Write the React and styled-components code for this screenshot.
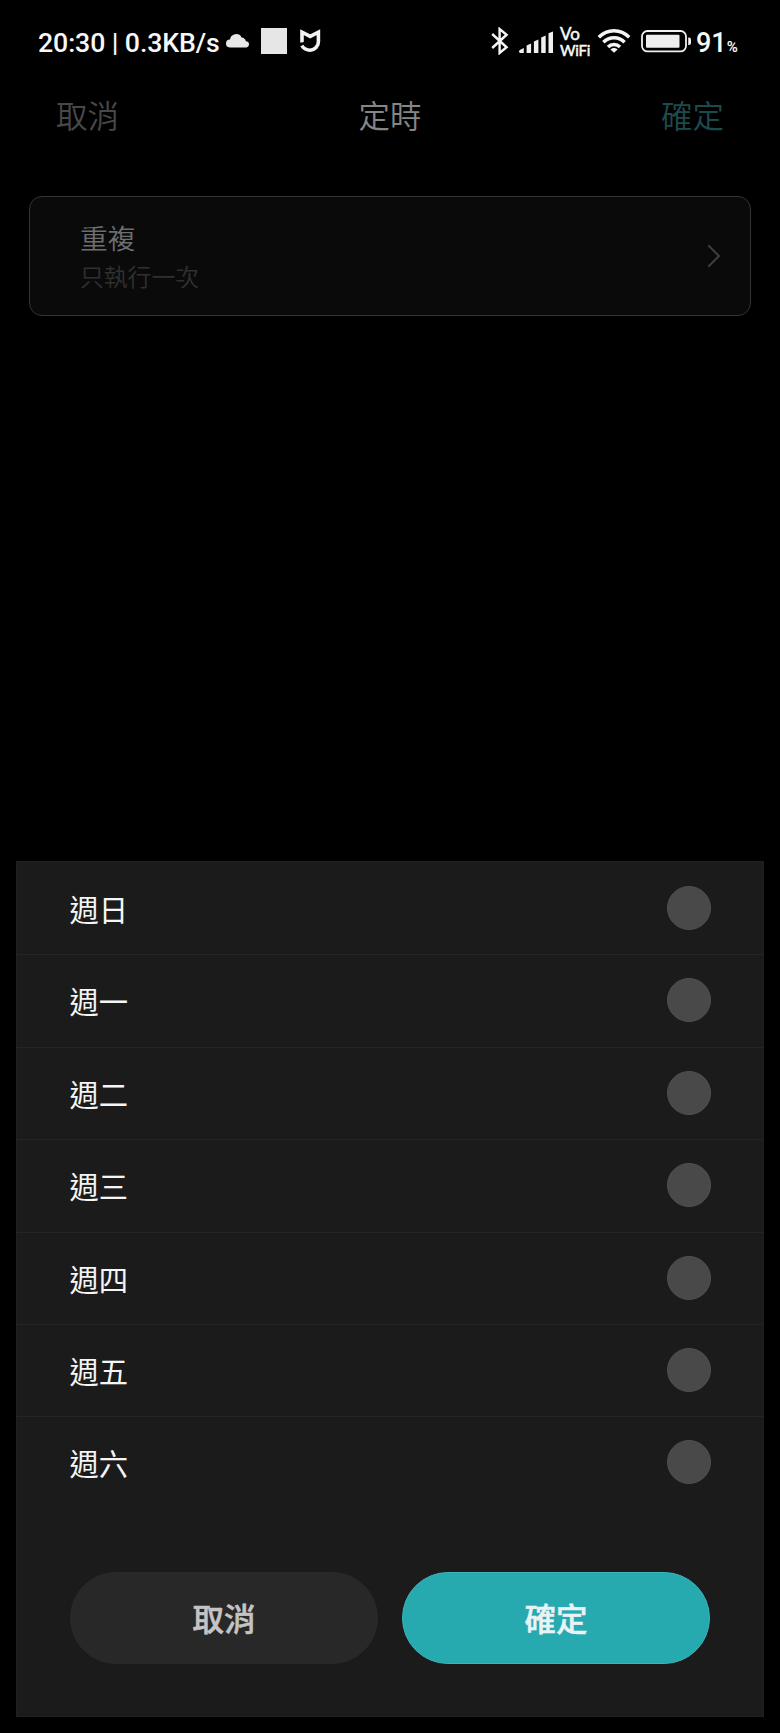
import styled, { createGlobalStyle } from 'styled-components';

const days = ['週日', '週一', '週二', '週三', '週四', '週五', '週六'];

function CloudIcon() {
  return (
    <svg width="24" height="14" viewBox="0 0 24 14" fill="#e8e8e8">
      <path d="M3.8 13.4A3.8 3.8 0 0 1 4 5.6 6.2 6.2 0 0 1 15.6 3.4 4.8 4.8 0 0 1 19.9 7.3 3.1 3.1 0 0 1 20.7 13.4Z" />
    </svg>
  );
}

function MiHomeIcon() {
  return (
    <svg width="21" height="24" viewBox="0 0 21 24" fill="none" stroke="#f2f2f2" strokeWidth="3.6">
      <path d="M2 13.6V3.2L10.2 7.4 18.4 3.2V12.6A8.4 8.4 0 0 1 10.2 21.2C6.6 21.2 3.6 19.4 1.8 16.6" />
      <path d="M.2 15.8 4.4 13.2" stroke="#000" strokeWidth="1.3" />
    </svg>
  );
}

function BluetoothIcon() {
  return (
    <svg width="18" height="28" viewBox="0 0 18 28" fill="none" stroke="#f5f5f5" strokeWidth="2.4">
      <path d="M1.2 7 15.6 20.3 8.6 26V2L15.6 7.7 1.2 21" />
    </svg>
  );
}

function SignalIcon() {
  return (
    <svg width="35" height="22" viewBox="0 0 35 22" fill="#f0f0f0">
      <path d="M0 20.6Q0 19.3 1.2 18.8L4.8 17V22H1.2Q0 22 0 20.6Z" />
      <path d="M7.6 14.6 12.1 12.6V22H7.6Z" />
      <path d="M14.9 10.6 19.4 8.6V22H14.9Z" />
      <path d="M22.2 6.4 26.7 4.4V22H22.2Z" />
      <path d="M29.5 2.2 34 .4V22H29.5Z" />
    </svg>
  );
}

function WifiIcon() {
  return (
    <svg width="34" height="25" viewBox="0 0 34 25" fill="none" stroke="#f5f5f5" strokeWidth="3.5">
      <path d="M1.8 9.2C10.4 .5 23.6 .5 32.2 9.2" />
      <path d="M6.4 14.2C12.5 8.2 21.5 8.2 27.6 14.2" />
      <path d="M11 19C14.4 15.6 19.6 15.6 23 19" />
      <path d="M17 24.8 13.4 21.4C15.4 19.4 18.6 19.4 20.6 21.4Z" fill="#f5f5f5" stroke="none" />
    </svg>
  );
}

function BatteryIcon() {
  return (
    <svg width="51" height="23" viewBox="0 0 51 23">
      <rect x="1" y="1" width="44" height="20.4" rx="5.5" fill="none" stroke="#f0f0f0" strokeWidth="1.8" />
      <rect x="5" y="4.7" width="33.5" height="13" rx="1" fill="#ededed" />
      <path d="M47.2 7.5H48A2 2 0 0 1 50 9.5V13A2 2 0 0 1 48 15H47.2Z" fill="#f0f0f0" />
    </svg>
  );
}

function ChevronIcon() {
  return (
    <svg width="14" height="24" viewBox="0 0 14 24" fill="none" stroke="#3e3e3e" strokeWidth="2">
      <path d="M1.2 1.2 12 12 1.2 22.8" />
    </svg>
  );
}

export default function App() {
  return (
    <Screen>
      <GlobalStyle />

      <StatusBar>
        <StatusText>20:30 | 0.3KB/s</StatusText>
        <StatusSlot $left={7} $top={34}><CloudIcon /></StatusSlot>
        <StatusSlot $left={11} $top={28}><AppSquare /></StatusSlot>
        <StatusSlot $left={13} $top={29}><MiHomeIcon /></StatusSlot>
        <Spacer />
        <StatusSlot $top={27}><BluetoothIcon /></StatusSlot>
        <StatusSlot $left={10} $top={31}><SignalIcon /></StatusSlot>
        <VoWifi>
          <span>Vo</span>
          <span>WiFi</span>
        </VoWifi>
        <StatusSlot $left={5} $top={28}><WifiIcon /></StatusSlot>
        <StatusSlot $left={10} $top={30}><BatteryIcon /></StatusSlot>
        <Percent>91<small>%</small></Percent>
      </StatusBar>

      <Header>
        <HeaderAction $color="#484848">取消</HeaderAction>
        <HeaderTitle>定時</HeaderTitle>
        <HeaderAction $color="#1c4b4d" $right>確定</HeaderAction>
      </Header>

      <RepeatCard>
        <div>
          <CardTitle>重複</CardTitle>
          <CardHint>只執行一次</CardHint>
        </div>
        <ChevronIcon />
      </RepeatCard>

      <Sheet>
        {days.map(day => (
          <DayRow key={day}>
            <span>{day}</span>
            <DayToggle aria-label={day} />
          </DayRow>
        ))}
        <SheetActions>
          <SheetButton>取消</SheetButton>
          <SheetButton $primary>確定</SheetButton>
        </SheetActions>
      </Sheet>
    </Screen>
  );
}

// Styled Components
const GlobalStyle = createGlobalStyle`
  * {
    box-sizing: border-box;
  }

  body {
    margin: 0;
    background: #000;
  }

  button {
    font-family: inherit;
    border: none;
    padding: 0;
    cursor: pointer;
  }

  svg {
    display: block;
    flex-shrink: 0;
  }
`;

const Screen = styled.div`
  width: 780px;
  height: 1733px;
  display: flex;
  flex-direction: column;
  overflow: hidden;
  background: #000;
  font-family: 'Noto Sans CJK TC', sans-serif;
`;

const StatusBar = styled.div`
  height: 80px;
  padding: 0 42px 0 38px;
  display: flex;
  align-items: flex-start;
  flex-shrink: 0;
  color: #f8f8f8;
  font-family: Roboto, sans-serif;
`;

const StatusText = styled.span`
  width: 181px;
  padding-top: 28px;
  font-size: 26.7px;
  font-weight: 500;
  line-height: 30px;
  letter-spacing: -0.1px;
  white-space: nowrap;
`;

const StatusSlot = styled.div`
  padding-top: ${props => props.$top}px;
  margin-left: ${props => props.$left || 0}px;
`;

const AppSquare = styled.div`
  width: 26px;
  height: 26px;
  background: #e6e6e6;
`;

const Spacer = styled.div`
  flex: 1;
`;

const VoWifi = styled.div`
  width: 32px;
  margin-left: 6px;
  padding-top: 26px;
  display: flex;
  flex-direction: column;
  font-family: Lato, sans-serif;
  font-size: 15px;
  font-weight: 400;
  line-height: 16px;
  -webkit-text-stroke: 0.5px #f8f8f8;

  span:first-child {
    font-size: 17px;
  }

  span:last-child {
    letter-spacing: -0.2px;
  }
`;

const Percent = styled.div`
  width: 42px;
  margin-left: 4px;
  padding-top: 28px;
  font-size: 27px;
  font-weight: 500;
  line-height: 30px;
  white-space: nowrap;

  small {
    margin-left: 0;
    font-size: 15px;
    font-weight: 600;
  }
`;

const Header = styled.header`
  height: 115px;
  padding: 11px 56px 0;
  display: grid;
  grid-template-columns: 1fr auto 1fr;
  flex-shrink: 0;
  font-size: 31.5px;
  line-height: 46px;
`;

const HeaderAction = styled.button`
  height: 46px;
  background: none;
  color: ${props => props.$color};
  font-size: 31.5px;
  font-weight: 350;
  line-height: 46px;
  text-align: ${props => (props.$right ? 'right' : 'left')};
`;

const HeaderTitle = styled.h1`
  margin: 0;
  color: #868686;
  font-size: 31.5px;
  font-weight: 350;
`;

const RepeatCard = styled.section`
  width: 722px;
  height: 120px;
  margin: 1px 0 0 29px;
  padding: 0 29px 1px 50px;
  display: flex;
  align-items: center;
  justify-content: space-between;
  flex-shrink: 0;
  background: #0a0a0a;
  border: 1px solid #333;
  border-radius: 13px;
`;

const CardTitle = styled.div`
  color: #6e6e6e;
  font-size: 27.7px;
  font-weight: 350;
  line-height: 40px;
`;

const CardHint = styled.div`
  color: #303030;
  font-size: 23.8px;
  font-weight: 350;
  line-height: 37px;
`;

const Sheet = styled.main`
  height: 856px;
  margin: 545px 16px 0;
  padding-top: 1px;
  flex-shrink: 0;
  background: #1b1b1b;
  border: 1px solid #202020;
`;

const DayRow = styled.div`
  height: 92.4px;
  padding: 0 52.5px 1.4px;
  display: flex;
  align-items: center;
  justify-content: space-between;
  border-bottom: 1px solid #252525;
  color: #f5f5f5;
  font-size: 29.3px;
  line-height: 42px;

  &:nth-child(7) {
    border-bottom-color: transparent;
  }
`;

const DayToggle = styled.button`
  width: 44px;
  height: 44px;
  background: #494949;
  border: 1px solid #505050;
  border-radius: 50%;
`;

const SheetActions = styled.div`
  margin-top: 62px;
  padding: 0 53px;
  display: flex;
  gap: 24px;
`;

const SheetButton = styled.button`
  flex: 1;
  height: 92px;
  padding-bottom: 2px;
  background: ${props => (props.$primary ? '#26a9af' : '#282828')};
  border: 1px solid ${props => (props.$primary ? '#3bb5ba' : '#2a2a2a')};
  border-radius: 46px;
  color: ${props => (props.$primary ? '#e9f3f5' : '#c4c4c4')};
  font-size: 31.5px;
  font-weight: 500;
  line-height: 44px;
  -webkit-text-stroke: 0.5px currentColor;
`;
